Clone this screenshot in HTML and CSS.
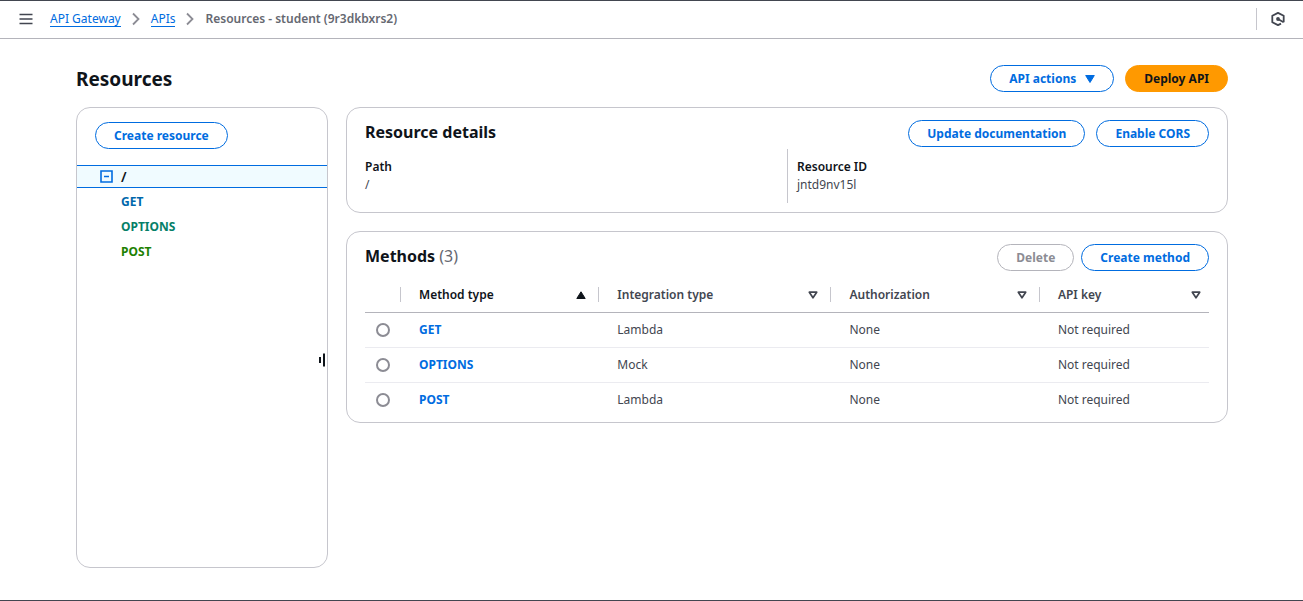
FILE: index.html
```html
<!DOCTYPE html>
<html lang="en">
<head>
<meta charset="utf-8">
<title>API Gateway - Resources</title>
<link rel="stylesheet" href="styles.css">
</head>
<body>
<div class="app">
  <header class="topbar">
    <button class="icon-button" type="button" aria-label="Open navigation">
      <svg width="14" height="14" viewBox="0 0 14 14"><path d="M.5 2.5h13M.5 7h13M.5 11.5h13" stroke="#424650" stroke-width="1.7" fill="none"/></svg>
    </button>
    <nav class="breadcrumbs" aria-label="Breadcrumbs">
      <a href="#">API Gateway</a>
      <svg class="chevron" width="8" height="14" viewBox="0 0 8 14"><path d="M1 1.5 6.5 7 1 12.5" stroke="#8c8c94" stroke-width="1.8" fill="none"/></svg>
      <a href="#">APIs</a>
      <svg class="chevron" width="8" height="14" viewBox="0 0 8 14"><path d="M1 1.5 6.5 7 1 12.5" stroke="#8c8c94" stroke-width="1.8" fill="none"/></svg>
      <span class="current">Resources - student (9r3dkbxrs2)</span>
    </nav>
    <div class="tools">
      <button class="icon-button" type="button" aria-label="Tools">
        <svg width="14" height="14" viewBox="0 0 14 14"><path d="M12.7 8V3.8L7 .9 1.3 3.8v6.4L7 13.1l3-1.5M12.7 8v2.2" stroke="#424650" stroke-width="1.8" fill="none" stroke-linejoin="round"/><circle cx="7" cy="7" r="1.9" fill="#424650"/><path d="M7 7l5.6 3.2" stroke="#424650" stroke-width="1.8"/></svg>
      </button>
    </div>
  </header>

  <main class="page">
    <div class="page-header">
      <h1>Resources</h1>
      <div class="actions">
        <button class="button" type="button">API actions
          <svg width="10" height="8" viewBox="0 0 10 8"><path d="M.7.5h8.6L5 7.5z" fill="currentColor" stroke="currentColor" stroke-linejoin="round"/></svg>
        </button>
        <button class="button primary" type="button">Deploy API</button>
      </div>
    </div>

    <div class="columns">
      <aside class="card sidebar">
        <div class="sidebar-head"><button class="button" type="button">Create resource</button></div>
        <div class="tree-root">
          <button class="icon-button" type="button" aria-label="Collapse">
            <svg width="13" height="13" viewBox="0 0 13 13"><path d="M1 1h11v11H1zM4 6.5h5" stroke="#006ce0" stroke-width="1.6" fill="none"/></svg>
          </button>
          <span>/</span>
        </div>
        <ul class="tree">
          <li><a class="get" href="#">GET</a></li>
          <li><a class="options" href="#">OPTIONS</a></li>
          <li><a class="post" href="#">POST</a></li>
        </ul>
        <button class="resizer" type="button" aria-label="Resize panel">
          <svg width="8" height="14" viewBox="0 0 8 14"><path d="M2 4v6" stroke="#0f141a" stroke-width="2"/><path d="M6 0.5v13" stroke="#0f141a" stroke-width="2"/></svg>
        </button>
      </aside>

      <div class="content">
        <section class="card details">
          <div class="card-header">
            <h2>Resource details</h2>
            <div class="actions">
              <button class="button" type="button">Update documentation</button>
              <button class="button" type="button">Enable CORS</button>
            </div>
          </div>
          <dl class="pairs">
            <div class="pair"><dt>Path</dt><dd>/</dd></div>
            <div class="pair"><dt>Resource ID</dt><dd>jntd9nv15l</dd></div>
          </dl>
        </section>

        <section class="card methods">
          <div class="card-header">
            <h2>Methods <span class="count">(3)</span></h2>
            <div class="actions tight">
              <button class="button" type="button" disabled>Delete</button>
              <button class="button" type="button">Create method</button>
            </div>
          </div>
          <table class="table">
            <colgroup><col class="c-select"><col class="c-method"><col class="c-type"><col class="c-auth"><col></colgroup>
            <thead>
              <tr>
                <th aria-label="Select"></th>
                <th class="sorted"><div class="th">Method type<svg width="10" height="8" viewBox="0 0 10 8"><path d="M5 .8 9.2 7.5H.8z" fill="#0f141a" stroke="#0f141a" stroke-linejoin="round"/></svg></div></th>
                <th><div class="th">Integration type<svg width="10" height="8" viewBox="0 0 10 8"><path d="M1.3 1.2h7.4L5 6.8z" fill="none" stroke="#424650" stroke-width="1.7" stroke-linejoin="round"/></svg></div></th>
                <th><div class="th">Authorization<svg width="10" height="8" viewBox="0 0 10 8"><path d="M1.3 1.2h7.4L5 6.8z" fill="none" stroke="#424650" stroke-width="1.7" stroke-linejoin="round"/></svg></div></th>
                <th><div class="th">API key<svg width="10" height="8" viewBox="0 0 10 8"><path d="M1.3 1.2h7.4L5 6.8z" fill="none" stroke="#424650" stroke-width="1.7" stroke-linejoin="round"/></svg></div></th>
              </tr>
            </thead>
            <tbody>
              <tr><td class="select"><input type="radio" name="method" aria-label="GET"></td><td><a href="#">GET</a></td><td>Lambda</td><td>None</td><td>Not required</td></tr>
              <tr><td class="select"><input type="radio" name="method" aria-label="OPTIONS"></td><td><a href="#">OPTIONS</a></td><td>Mock</td><td>None</td><td>Not required</td></tr>
              <tr><td class="select"><input type="radio" name="method" aria-label="POST"></td><td><a href="#">POST</a></td><td>Lambda</td><td>None</td><td>Not required</td></tr>
            </tbody>
          </table>
        </section>
      </div>
    </div>
  </main>
</div>
</body>
</html>
```
FILE: styles.css
```css
* { box-sizing: border-box; }
body {
  margin: 0;
  background: #fff;
  color: #424650;
  font: 12px/18px "Noto Sans", "Open Sans", sans-serif;
}
svg { display: block; flex: none; }
h1, h2, dl, dd, ul { margin: 0; padding: 0; }
button, input { font: inherit; margin: 0; }
a { color: #006ce0; text-decoration: none; }
.app {
  min-height: 100vh;
  display: flex;
  flex-direction: column;
  border-top: 1px solid #424650;
  border-bottom: 1px solid #424650;
}
.topbar {
  display: flex;
  align-items: center;
  height: 38px;
  padding: 0 18px 2px 19px;
  border-bottom: 1px solid #b4b4bb;
}
.icon-button { padding: 0; border: 0; background: none; cursor: pointer; }
.breadcrumbs { display: flex; align-items: center; gap: 11px; margin-left: 17px; }
.breadcrumbs a { line-height: 15px; border-bottom: 1px solid #006ce0; }
.current { font-weight: 600; color: #656871; }
.tools {
  display: flex;
  align-items: center;
  height: 22px;
  margin-left: auto;
  padding-left: 14px;
  border-left: 1px solid #c6c6cd;
}
.page {
  flex: 1;
  display: flex;
  flex-direction: column;
  padding: 26px 75px 32px 76px;
}
.page-header {
  display: flex;
  align-items: center;
  justify-content: space-between;
  margin-bottom: 15px;
}
h1 { font-size: 19px; line-height: 24px; font-weight: 700; color: #0f141a; }
h2 { font-size: 16px; line-height: 20px; font-weight: 700; color: #0f141a; }
.count { font-weight: 400; color: #656871; }
.actions { display: flex; gap: 11px; }
.actions.tight { gap: 7px; }
.button {
  display: flex;
  align-items: center;
  gap: 9px;
  height: 27px;
  padding: 0 18px;
  border: 1px solid #006ce0;
  border-radius: 14px;
  background: #fff;
  color: #006ce0;
  font-weight: 700;
  white-space: nowrap;
  cursor: pointer;
}
.button.primary { background: #f90; border-color: #f90; color: #0f141a; }
.button:disabled { color: #8c8c94; border-color: #b4b4bb; cursor: default; }
.columns { flex: 1; display: flex; gap: 18px; }
.card { border: 1px solid #c6c6cd; border-radius: 14px; background: #fff; }
.sidebar { position: relative; flex: none; width: 252px; }
.sidebar-head { display: flex; padding: 14px 18px 16px; }
.tree-root {
  display: flex;
  align-items: center;
  gap: 8px;
  height: 23px;
  padding-left: 23px;
  border-top: 1px solid #006ce0;
  border-bottom: 1px solid #006ce0;
  background: #f0fbff;
  color: #0f141a;
  font-size: 14px;
  font-weight: 600;
}
.tree { list-style: none; padding: 1px 0 0 44px; line-height: 25px; font-weight: 700; }
.get { color: #0067ab; }
.options { color: #067f68; }
.post { color: #1d8102; }
.resizer {
  position: absolute;
  right: 1px;
  top: 55%;
  transform: translateY(-50%);
  padding: 0;
  border: 0;
  background: none;
  cursor: col-resize;
}
.content { flex: 1; min-width: 0; display: flex; flex-direction: column; gap: 18px; }
.card-header { display: flex; justify-content: space-between; }
.details { padding: 12px 18px 9px; }
.details h2, .methods h2 { padding-top: 2px; }
.pairs { display: grid; grid-template-columns: 1fr 1fr; margin-top: 2px; }
.pair { padding: 9px 0; }
.pair + .pair { padding-left: 9px; border-left: 1px solid #c6c6cd; }
dt { font-weight: 600; color: #0f141a; }
.methods { padding: 12px 18px 4px; }
.table {
  width: 100%;
  margin-top: 6px;
  table-layout: fixed;
  border-collapse: separate;
  border-spacing: 0;
}
.c-select { width: 35px; }
.c-method { width: 23.5%; }
.c-type { width: 27.5%; }
.c-auth { width: 24.7%; }
th { padding: 10px 0; border-bottom: 1px solid #b4b4bb; text-align: left; font-weight: 600; }
.th {
  display: flex;
  align-items: center;
  justify-content: space-between;
  height: 15px;
  padding-right: 12px;
}
th .th { padding-left: 18px; }
th + th .th { border-left: 1px solid #c6c6cd; }
th:last-child .th { padding-right: 8px; }
.sorted { color: #0f141a; }
td { height: 35px; padding: 0 0 0 19px; border-bottom: 1px solid #ebebf0; }
tr:last-child td { border-bottom-color: transparent; }
td a { font-weight: 700; }
td.select { padding: 0 0 0 11px; }
td input {
  display: block;
  appearance: none;
  width: 14px;
  height: 14px;
  border: 2px solid #8c8c94;
  border-radius: 50%;
  background: #fff;
}
```
